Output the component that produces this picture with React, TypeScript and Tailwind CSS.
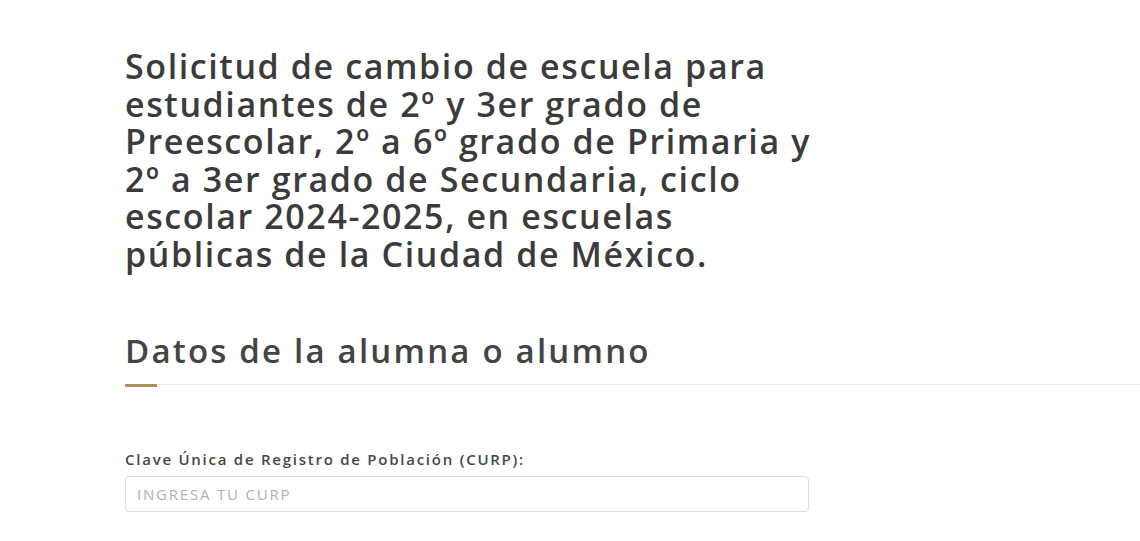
export default function App() {
  const font = { fontFamily: '"Open Sans", "Liberation Sans", sans-serif' }
  return (
    <div className="min-h-[541px] w-[1140px] overflow-hidden bg-white" style={font}>
      <div className="pl-[125px] pt-[48px]">
        <h1 className="w-[720px] text-[34px] leading-[37.6px] font-semibold tracking-[1.6px] text-[#3b3b3b]">
          Solicitud de cambio de escuela para<br />
          estudiantes de 2º y 3er grado de<br />
          Preescolar, 2º a 6º grado de Primaria y<br />
          2º a 3er grado de Secundaria, ciclo<br />
          escolar 2024-2025, en escuelas<br />
          públicas de la Ciudad de México.
        </h1>
      </div>

      {/* Section heading */}
      <div className="mt-[57px] pl-[125px]">
        <h2 className="text-[33px] leading-[40px] font-semibold tracking-[2.2px] text-[#444444]">
          Datos de la alumna o alumno
        </h2>
        <div className="relative mt-[13px] h-px bg-[#eeeeee]">
          <div className="absolute left-0 top-0 h-[3px] w-[32px] bg-[#b38e5d]" />
        </div>
      </div>

      {/* Form */}
      <div className="mt-[65px] ml-[125px] w-[684px]">
        <label className="block text-[15px] leading-[18px] font-semibold tracking-[1.75px] text-[#474747]">
          Clave Única de Registro de Población (CURP):
        </label>
        <input
          className="mt-[8px] h-[36px] w-full rounded-[4px] border border-[#dddddd] px-[11px] text-[15px] tracking-[1.8px] uppercase text-[#555] placeholder:text-[#b0b0b0] outline-none"
          placeholder="INGRESA TU CURP"
        />
      </div>
    </div>
  )
}
